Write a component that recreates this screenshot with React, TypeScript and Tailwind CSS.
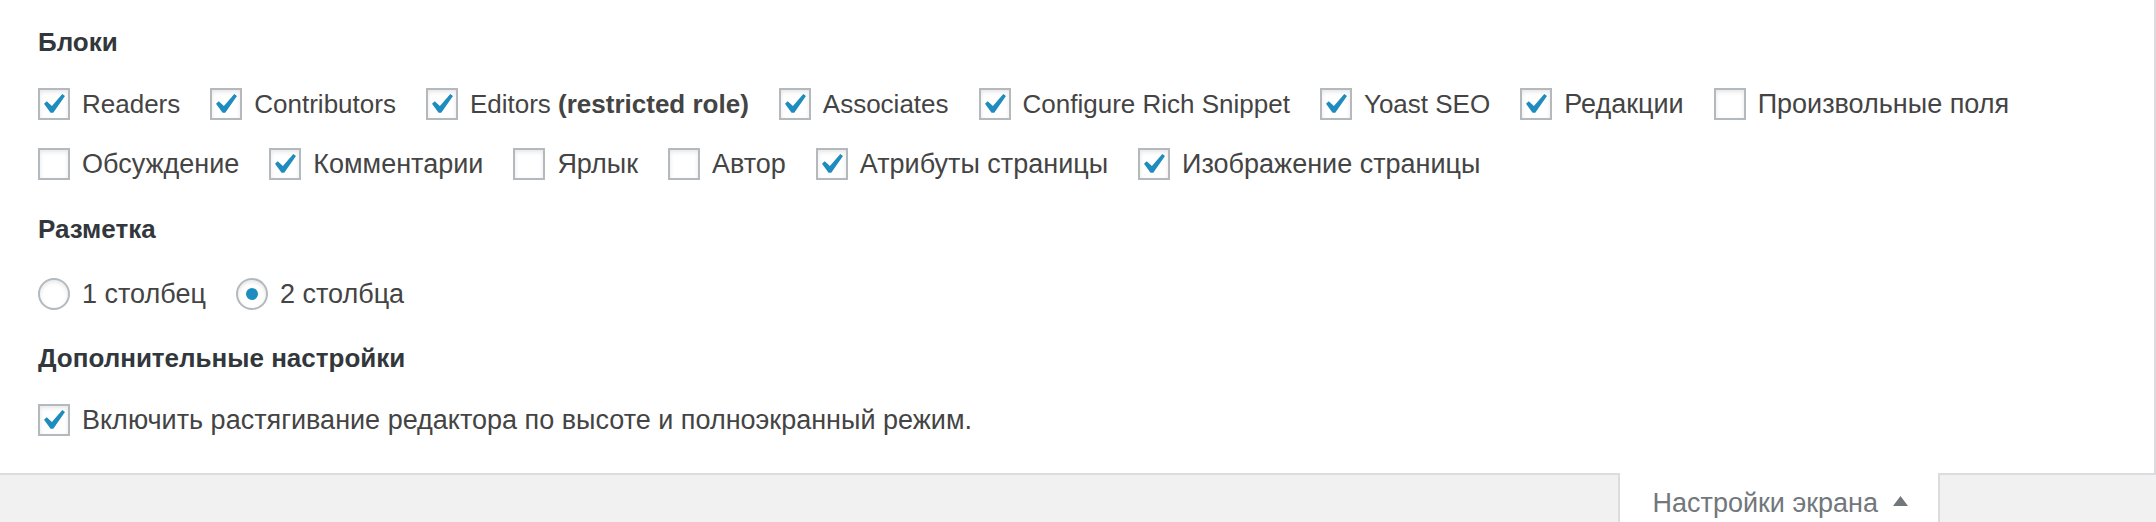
import React from "react";

type Item = { label: React.ReactNode; checked: boolean; ru?: boolean };

const row1: Item[] = [
  { label: "Readers", checked: true },
  { label: "Contributors", checked: true },
  {
    label: (
      <>
        Editors <b className="font-bold">(restricted role)</b>
      </>
    ),
    checked: true,
  },
  { label: "Associates", checked: true },
  { label: "Configure Rich Snippet", checked: true },
  { label: "Yoast SEO", checked: true },
  { label: "Редакции", checked: true, ru: true },
  { label: "Произвольные поля", checked: false, ru: true },
];

const row2: Item[] = [
  { label: "Обсуждение", checked: false, ru: true },
  { label: "Комментарии", checked: true, ru: true },
  { label: "Ярлык", checked: false, ru: true },
  { label: "Автор", checked: false, ru: true },
  { label: "Атрибуты страницы", checked: true, ru: true },
  { label: "Изображение страницы", checked: true, ru: true },
];

const Checkbox = ({ checked }: { checked: boolean }) => (
  <span className="relative w-[32px] h-[32px] shrink-0 border-2 border-[#b4b9be] bg-white shadow-[inset_0_2px_4px_rgba(0,0,0,0.1)]">
    {checked && (
      <svg
        className="absolute -left-[2px] -top-[2px] w-[32px] h-[32px]"
        viewBox="2.8 1.9 15.85 15.85"
      >
        <path
          d="M14.83 4.89l1.34.94-5.81 8.38H9.02L5.78 9.67l1.34-1.25 2.57 2.4z"
          fill="#1e8cbe"
        />
      </svg>
    )}
  </span>
);

const Radio = ({ checked }: { checked: boolean }) => (
  <span className="flex items-center justify-center w-[32px] h-[32px] shrink-0 rounded-full border-2 border-[#b4b9be] bg-white shadow-[inset_0_2px_4px_rgba(0,0,0,0.1)]">
    {checked && <span className="w-[12px] h-[12px] rounded-full bg-[#1e8cbe]" />}
  </span>
);

// cyrillic glyphs in Liberation run a bit narrower than the original, so bump them
const CheckRow = ({ items }: { items: Item[] }) => (
  <div className="flex items-center gap-[30px]">
    {items.map((it, i) => (
      <label key={i} className="flex items-center gap-[12px] whitespace-nowrap">
        <Checkbox checked={it.checked} />
        <span className={it.ru ? "text-[27px]" : "text-[26px]"}>{it.label}</span>
      </label>
    ))}
  </div>
);

const Heading = ({ children, className }: { children: React.ReactNode; className?: string }) => (
  <h5 className={"text-[26px] font-bold text-[#32373c] " + (className || "")}>{children}</h5>
);

export default function App() {
  return (
    <div className="w-full h-[522px] overflow-hidden bg-[#f1f1f1] font-['Liberation_Sans',Arial,sans-serif] text-[27px] leading-[36px] text-[#444]">
      <div className="h-[475px] bg-white border-r-2 border-b-2 border-[#dcdcde] pl-[38px] pt-[24px] flex flex-col">
        <Heading>Блоки</Heading>
        <div className="mt-[26px] flex flex-col gap-[24px]">
          <CheckRow items={row1} />
          <CheckRow items={row2} />
        </div>

        <Heading className="mt-[29px]">Разметка</Heading>
        <div className="mt-[29px] flex items-center gap-[30px]">
          <label className="flex items-center gap-[12px]">
            <Radio checked={false} />
            <span>1 столбец</span>
          </label>
          <label className="flex items-center gap-[12px]">
            <Radio checked />
            <span>2 столбца</span>
          </label>
        </div>

        <Heading className="mt-[28px]">Дополнительные настройки</Heading>
        <div className="mt-[26px]">
          <CheckRow
            items={[
              {
                label: "Включить растягивание редактора по высоте и полноэкранный режим.",
                checked: true,
                ru: true,
              },
            ]}
          />
        </div>
      </div>

      <div className="flex justify-end pr-[216px]">
        <button className="relative -mt-[2px] h-[49px] bg-white border-x-2 border-[#dcdcde] pl-[33px] pr-[30px] pt-[12px] flex items-start gap-[15px] text-[#72777c]">
          <span>Настройки экрана</span>
          <svg className="mt-[11px] w-[15px] h-[10px]" viewBox="0 0 15 10">
            <path d="M7.5 0L15 10H0z" fill="#72777c" />
          </svg>
        </button>
      </div>
    </div>
  );
}
